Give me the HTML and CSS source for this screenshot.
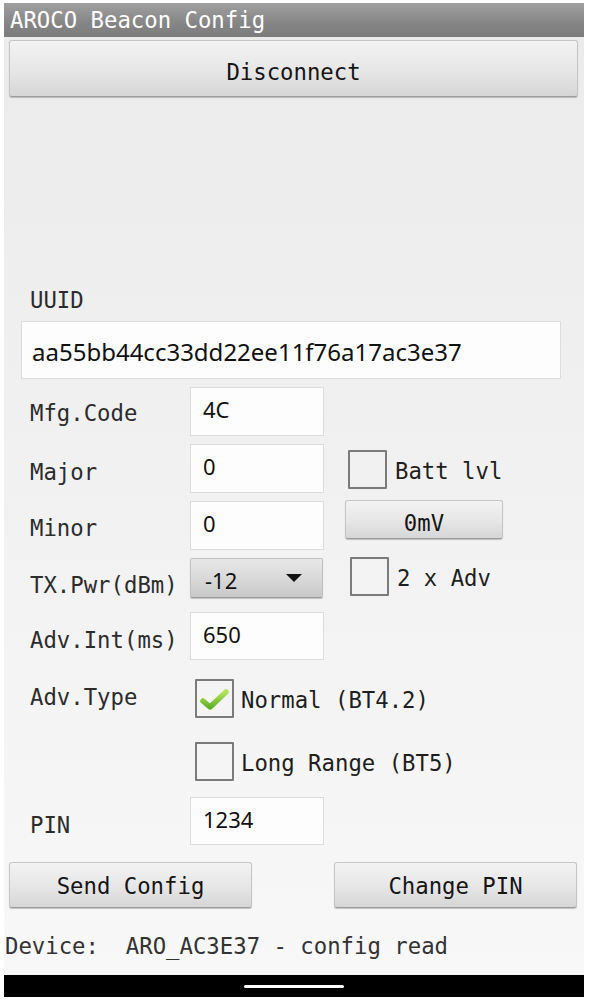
FILE: index.html
```html
<!DOCTYPE html>
<html lang="en">
<head>
<meta charset="utf-8">
<title>AROCO Beacon Config</title>
<link rel="stylesheet" href="styles.css">
</head>
<body>
<div class="screen">
  <header class="titlebar">AROCO Beacon Config</header>
  <div class="btn btn-wide">Disconnect</div>

  <main class="form">
    <div class="uuid-label">UUID</div>
    <div class="field field-uuid">aa55bb44cc33dd22ee11f76a17ac3e37</div>

    <div class="row r-mfg">
      <span class="label l-mfg">Mfg.Code</span>
      <div class="field">4C</div>
    </div>

    <div class="row r-major">
      <span class="label l-13">Major</span>
      <div class="field">0</div>
      <div class="opt opt-batt"><span class="check"></span><span class="opt-text">Batt lvl</span></div>
    </div>

    <div class="row r-minor">
      <span class="label">Minor</span>
      <div class="field">0</div>
      <div class="btn btn-mv">0mV</div>
    </div>

    <div class="row r-tx">
      <span class="label">TX.Pwr(dBm)</span>
      <div class="spinner"><span class="spinner-value">-12</span><span class="spinner-arrow"></span></div>
      <div class="opt opt-adv"><span class="check"></span><span class="opt-text">2 x Adv</span></div>
    </div>

    <div class="row r-int">
      <span class="label l-13">Adv.Int(ms)</span>
      <div class="field">650</div>
    </div>

    <div class="row r-type">
      <span class="label l-type">Adv.Type</span>
      <div class="opt opt-type">
        <span class="check">
          <svg class="tick" viewBox="0 0 35 34" width="35" height="34" aria-hidden="true">
            <defs>
              <linearGradient id="g" x1="0" y1="0" x2="0" y2="1">
                <stop offset="0" stop-color="#b4e45e"/>
                <stop offset="1" stop-color="#62b228"/>
              </linearGradient>
            </defs>
            <path d="M6 19 L13 25 L29 10" fill="none" stroke="url(#g)" stroke-width="5.5" stroke-linecap="round" stroke-linejoin="round"/>
          </svg>
        </span>
        <span class="opt-text">Normal (BT4.2)</span>
      </div>
    </div>

    <div class="row r-long">
      <span class="label"></span>
      <div class="opt opt-type"><span class="check"></span><span class="opt-text">Long Range (BT5)</span></div>
    </div>

    <div class="row r-pin">
      <span class="label l-13">PIN</span>
      <div class="field">1234</div>
    </div>

    <div class="actions">
      <div class="btn btn-half">Send Config</div>
      <div class="btn btn-half">Change PIN</div>
    </div>

    <div class="status">Device:  ARO_AC3E37 - config read</div>
  </main>

  <div class="navbar"><span class="home"></span></div>
</div>
</body>
</html>
```
FILE: styles.css
```css
html, body {
  margin: 0;
  padding: 0;
  background: #ffffff;
}

.screen {
  margin: 3px 8px 0 4px;
  width: 580px;
  background: linear-gradient(#ebebeb 0%, #f0f0f0 40%, #f8f8f8 100%);
  font-family: "DejaVu Sans Mono", "Liberation Mono", monospace;
  font-size: 22.3px;
  color: #222;
}

.titlebar {
  height: 34px;
  line-height: 34px;
  padding-left: 6px;
  background: linear-gradient(#a0a0a0, #858585 60%, #7c7c7c);
  color: #ffffff;
  white-space: pre;
}

.btn {
  box-sizing: border-box;
  display: flex;
  align-items: center;
  justify-content: center;
  background: linear-gradient(#f3f3f3, #e6e6e6 55%, #d6d6d6);
  border: 1px solid #c6c6c6;
  border-bottom-color: #9c9c9c;
  border-radius: 3px;
  box-shadow: 0 1px 1px rgba(0, 0, 0, 0.22);
  color: #151515;
  white-space: pre;
}

.btn-wide {
  margin: 3px 0 0 5px;
  width: 569px;
  height: 57px;
  padding-top: 7px;
}

.form {
  display: flex;
  flex-direction: column;
}

.uuid-label {
  margin: 188px 0 0 26px;
  height: 30px;
  line-height: 30px;
  color: #2c2c2c;
}

.field {
  box-sizing: border-box;
  width: 134px;
  height: 100%;
  padding: 8px 0 0 12px;
  background: #fdfdfd;
  border: 1px solid #dcdcdc;
  font-family: "Noto Sans", "Open Sans", sans-serif;
  font-size: 22px;
  line-height: 26px;
  color: #111;
  flex: none;
}

.field-uuid {
  width: 540px;
  height: 58px;
  margin: 6px 0 0 17px;
  padding: 15px 0 0 10px;
  font-size: 24px;
  line-height: 30px;
}

.row {
  display: flex;
  align-items: flex-start;
  margin-left: 26px;
}

.label {
  width: 160px;
  flex: none;
  margin-top: 12px;
  line-height: 30px;
  color: #2c2c2c;
  white-space: pre;
}

.l-mfg { margin-top: 11px; }
.l-13 { margin-top: 13px; }
.l-type { margin-top: 3px; }

.r-mfg { margin-top: 8px; height: 49px; }
.r-major { margin-top: 8px; height: 49px; }
.r-minor { margin-top: 8px; height: 49px; }
.r-tx { margin-top: 8px; height: 40px; }
.r-int { margin-top: 14px; height: 48px; }
.r-type { margin-top: 19px; height: 39px; }
.r-long { margin-top: 24px; height: 39px; }
.r-pin { margin-top: 16px; height: 48px; }

.opt {
  display: flex;
  align-items: center;
  gap: 8px;
  white-space: pre;
  color: #1e1e1e;
}

.opt-batt { margin: 6px 0 0 24px; }
.opt-adv { margin: -1px 0 0 27px; }
.opt-type { margin-left: 5px; gap: 7px; }

.check {
  box-sizing: border-box;
  width: 39px;
  height: 39px;
  border: 2px solid #7b7b7b;
  border-radius: 1px;
  display: flex;
  align-items: center;
  justify-content: center;
  flex: none;
}

.opt-text {
  line-height: 30px;
  padding-top: 2px;
}

.btn-mv {
  margin: -1px 0 0 21px;
  width: 158px;
  height: 39px;
  padding-top: 6px;
}

.spinner {
  box-sizing: border-box;
  width: 133px;
  height: 40px;
  display: flex;
  align-items: center;
  justify-content: space-between;
  padding: 3px 20px 0 14px;
  background: linear-gradient(#e8e8e8, #d6d6d6 60%, #c8c8c8);
  border: 1px solid #c0c0c0;
  border-bottom-color: #9a9a9a;
  border-radius: 2px;
  box-shadow: 0 1px 1px rgba(0, 0, 0, 0.2);
  flex: none;
}

.spinner-value {
  font-family: "Noto Sans", "Open Sans", sans-serif;
  font-size: 22px;
  color: #111;
}

.spinner-arrow {
  width: 0;
  height: 0;
  border-left: 8px solid transparent;
  border-right: 8px solid transparent;
  border-top: 8px solid #111;
  margin-top: -4px;
}

.actions {
  display: flex;
  justify-content: space-between;
  margin-top: 17px;
  height: 46px;
  padding: 0 7px 0 5px;
}

.btn-half {
  width: 243px;
  height: 46px;
  padding-top: 2px;
}

.status {
  margin-top: 23px;
  height: 30px;
  line-height: 30px;
  padding-left: 1px;
  color: #333;
  white-space: pre;
}

.navbar {
  margin-top: 14px;
  height: 22px;
  background: #000;
  display: flex;
  align-items: center;
  justify-content: center;
}

.home {
  width: 100px;
  height: 3px;
  border-radius: 2px;
  background: #ffffff;
}
```
